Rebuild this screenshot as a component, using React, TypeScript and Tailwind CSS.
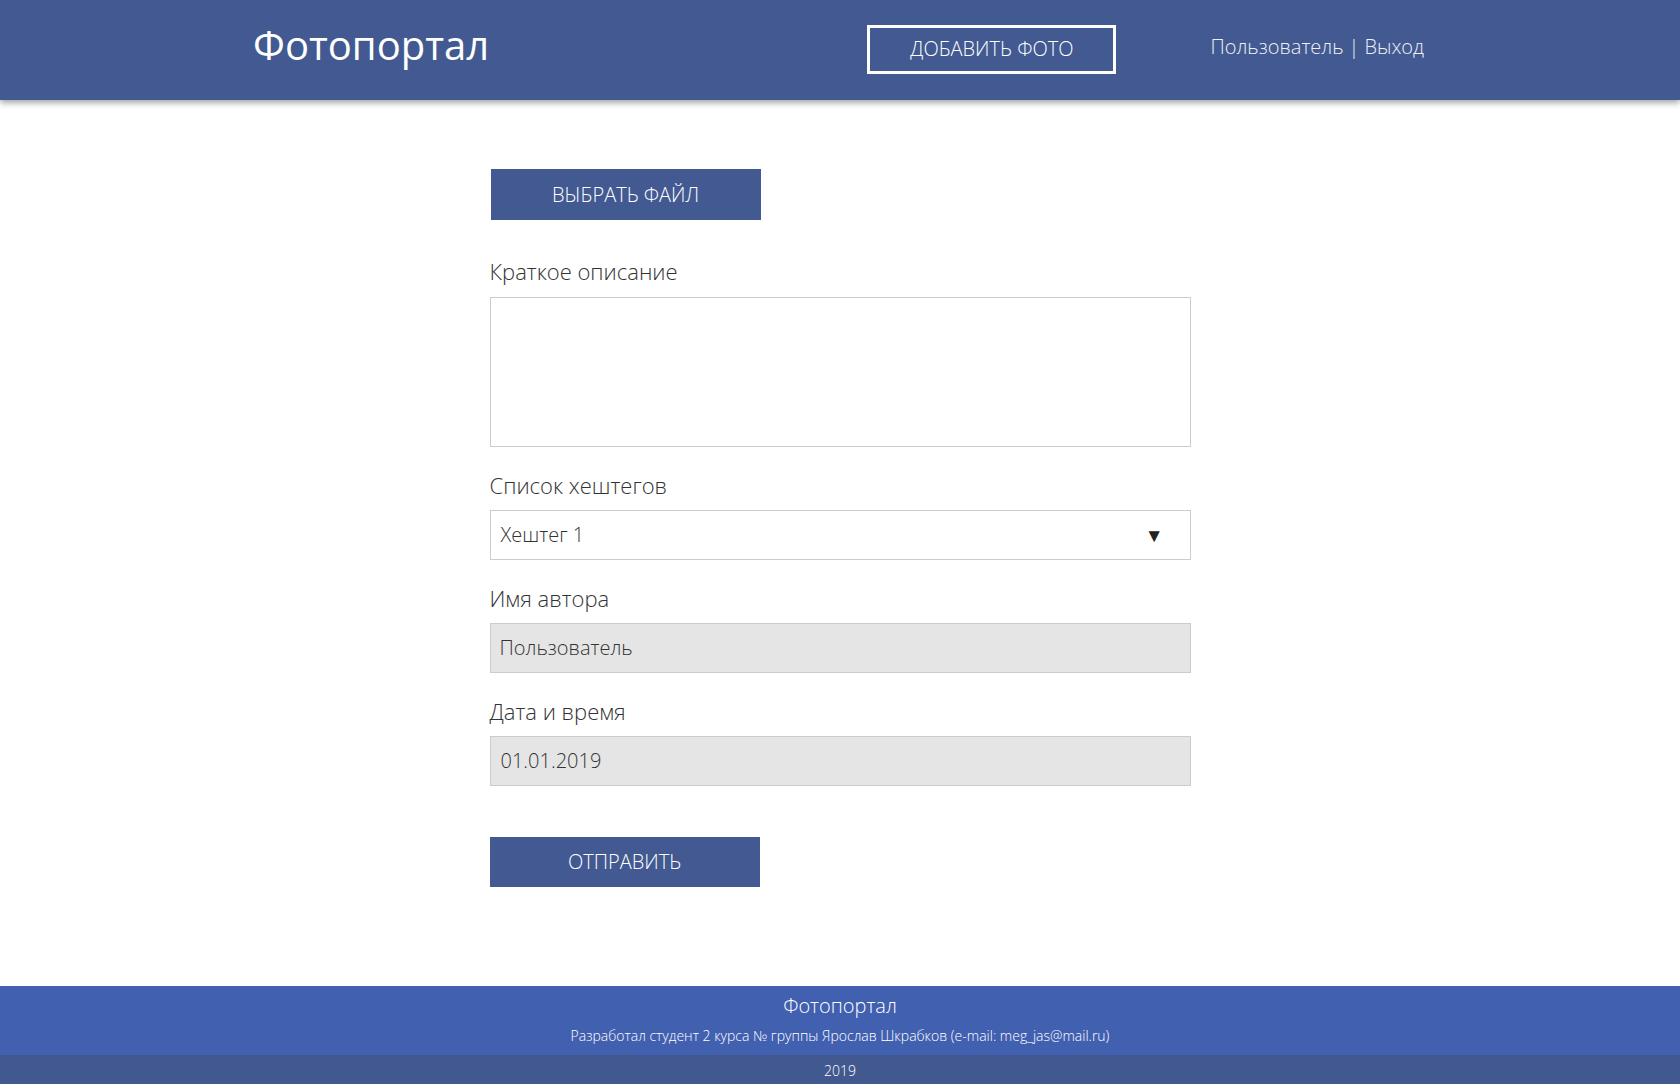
import React from "react";

const Label: React.FC<{ children: React.ReactNode; className?: string }> = ({ children, className }) => (
  <label className={`block text-[22px] leading-[30px] font-light text-[#333] ${className ?? ""}`}>{children}</label>
);

const Header: React.FC = () => (
  <header className="h-[100px] bg-[#425a91] shadow-[0_3px_6px_rgba(0,0,0,0.35)] relative z-10">
    <div className="w-[1170px] mx-auto h-full flex items-center">
      <div className="text-[40px] leading-none text-white font-normal -mt-[10px] ml-[-2px]">Фотопортал</div>
      <div className="ml-auto flex items-center">
        <button className="w-[249px] h-[49px] border-[3px] border-white text-white text-[20px] font-light uppercase mr-[94px] mt-[-2px]">
          Добавить фото
        </button>
        <div className="flex items-center text-[20px] font-light text-[#eef0f6] -mt-[6px] mr-[1px]">
          <span>Пользователь</span>
          <span className="mx-[5px]">|</span>
          <span>Выход</span>
        </div>
      </div>
    </div>
  </header>
);

const Form: React.FC = () => (
  <main className="w-[701px] mx-auto pt-[69px] pb-[99px]">
    <button className="w-[270px] h-[51px] ml-[1px] bg-[#425a91] text-white text-[20px] font-light uppercase">
      Выбрать файл
    </button>

    <Label className="mt-[36px]">Краткое описание</Label>
    <textarea className="mt-[11px] block w-full h-[150px] border border-[#cccccc] resize-none outline-none" />

    <Label className="mt-[23px]">Список хештегов</Label>
    <div className="mt-[10px] h-[50px] border border-[#cccccc] flex items-center pl-[10px] pr-[26px] text-[20px] font-light text-[#333]">
      <span>Хештег 1</span>
      <span className="ml-auto text-[19px] leading-none text-[#222]">▼</span>
    </div>

    <Label className="mt-[23px]">Имя автора</Label>
    <div className="mt-[10px] h-[50px] border border-[#cccccc] bg-[#e5e5e5] flex items-center pl-[9px] text-[20px] font-light text-[#333]">
      Пользователь
    </div>

    <Label className="mt-[23px]">Дата и время</Label>
    <div className="mt-[10px] h-[50px] border border-[#cccccc] bg-[#e5e5e5] flex items-center pl-[10px] text-[20px] font-light text-[#333]">
      01.01.2019
    </div>

    <button className="mt-[51px] w-[270px] h-[50px] bg-[#425a91] text-white text-[20px] font-light uppercase">
      Отправить
    </button>
  </main>
);

const Footer: React.FC = () => (
  <footer className="mt-auto text-white text-center">
    <div className="h-[69px] bg-[#4260b0] flex flex-col items-center pt-[8px]">
      <div className="text-[20px] font-light leading-[24px]">Фотопортал</div>
      <div className="text-[14px] font-light leading-[18px] mt-[9px]">
        Разработал студент 2 курса № группы Ярослав Шкрабков (e-mail: meg_jas@mail.ru)
      </div>
    </div>
    <div className="h-[31px] bg-[#42598f] flex items-center justify-center text-[14px] font-light">2019</div>
  </footer>
);

export default function App() {
  return (
    <div className="min-h-screen flex flex-col bg-white font-['Open_Sans',sans-serif]">
      <Header />
      <Form />
      <Footer />
    </div>
  );
}
